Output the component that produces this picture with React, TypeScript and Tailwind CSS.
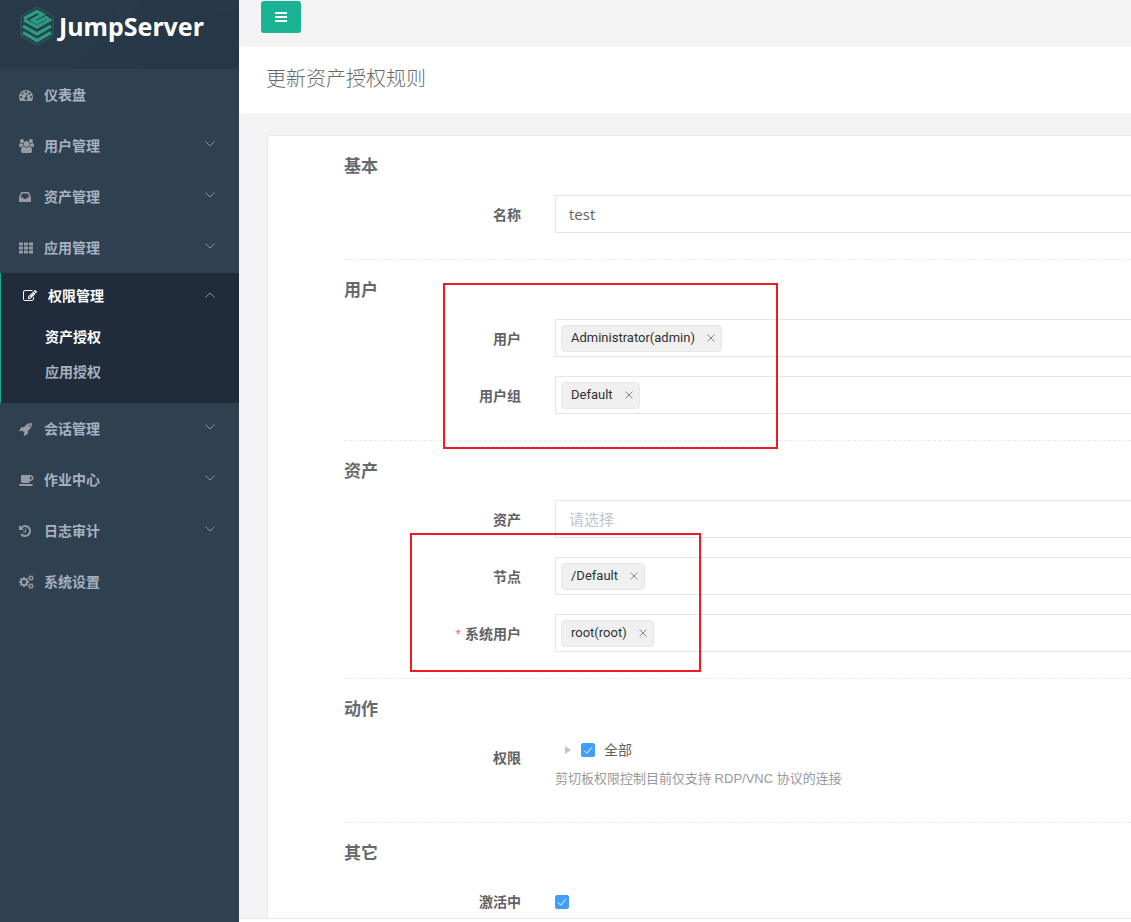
import { useState } from 'react';
import type { ReactNode } from 'react';
import clsx from 'clsx';

type IconShape = {
  width: number;
  path: string;
};

type MenuItem = {
  name: string;
  icon: keyof typeof ICONS;
  expandable?: boolean;
  children?: string[];
};

const ICONS = {
  dashboard: {
    width: 1792,
    path: 'M384 1152q0-53-37.5-90.5t-90.5-37.5-90.5 37.5-37.5 90.5 37.5 90.5 90.5 37.5 90.5-37.5 37.5-90.5zm192-448q0-53-37.5-90.5t-90.5-37.5-90.5 37.5-37.5 90.5 37.5 90.5 90.5 37.5 90.5-37.5 37.5-90.5zm428 481l101-382q6-26-7.5-48.5t-38.5-29.5-48 6.5-30 39.5l-101 382q-60 5-107 43.5t-63 98.5q-20 77 20 146t117 89 146-20 89-117q16-60-6-117t-72-91zm660-33q0-53-37.5-90.5t-90.5-37.5-90.5 37.5-37.5 90.5 37.5 90.5 90.5 37.5 90.5-37.5 37.5-90.5zm-640-640q0-53-37.5-90.5t-90.5-37.5-90.5 37.5-37.5 90.5 37.5 90.5 90.5 37.5 90.5-37.5 37.5-90.5zm448 192q0-53-37.5-90.5t-90.5-37.5-90.5 37.5-37.5 90.5 37.5 90.5 90.5 37.5 90.5-37.5 37.5-90.5zm320 448q0 261-141 483-19 29-54 29h-1402q-35 0-54-29-141-221-141-483 0-182 71-348t191-286 286-191 348-71 348 71 286 191 191 286 71 348z',
  },
  users: {
    width: 1920,
    path: 'M593 896q-162 5-265 128h-134q-82 0-138-40.5t-56-118.5q0-353 124-353 6 0 43.5 21t97.5 42.5 119 21.5q67 0 133-23-5 37-5 66 0 139 81 256zm1071 637q0 120-73 189.5t-194 69.5h-874q-121 0-194-69.5t-73-189.5q0-53 3.5-103.5t14-109 26.5-108.5 43-97.5 62-81 85.5-53.5 111.5-20q10 0 43 21.5t73 48 107 48 135 21.5 135-21.5 107-48 73-48 43-21.5q61 0 111.5 20t85.5 53.5 62 81 43 97.5 26.5 108.5 14 109 3.5 103.5zm-1024-1277q0 106-75 181t-181 75-181-75-75-181 75-181 181-75 181 75 75 181zm704 384q0 159-112.5 271.5t-271.5 112.5-271.5-112.5-112.5-271.5 112.5-271.5 271.5-112.5 271.5 112.5 112.5 271.5zm576 225q0 78-56 118.5t-138 40.5h-134q-103-123-265-128 81-117 81-256 0-29-5-66 66 23 133 23 59 0 119-21.5t97.5-42.5 43.5-21q124 0 124 353zm-128-609q0 106-75 181t-181 75-181-75-75-181 75-181 181-75 181 75 75 181z',
  },
  inbox: {
    width: 1536,
    path: 'M1023 960h316q-1-3-2.5-8t-2.5-8l-212-496h-708l-212 496q-1 2-2.5 8t-2.5 8h316l95 192h320zm513 30v482q0 26-19 45t-45 19h-1408q-26 0-45-19t-19-45v-482q0-62 25-123l238-552q10-25 36.5-42t52.5-17h832q26 0 52.5 17t36.5 42l238 552q25 61 25 123z',
  },
  grid: {
    width: 1792,
    path: 'M0 192h512v384H0zM640 192h512v384H640zM1280 192h512v384h-512zM0 704h512v384H0zM640 704h512v384H640zM1280 704h512v384h-512zM0 1216h512v384H0zM640 1216h512v384H640zM1280 1216h512v384h-512z',
  },
  edit: {
    width: 1792,
    path: 'M888 1184l116-116-152-152-116 116v56h96v96h56zm440-720q-16-16-33 1l-350 350q-17 17-1 33t33-1l350-350q17-17 1-33zm80 594v190q0 119-84.5 203.5t-203.5 84.5h-832q-119 0-203.5-84.5t-84.5-203.5v-832q0-119 84.5-203.5t203.5-84.5h832q63 0 117 25 15 7 18 23 3 17-9 29l-49 49q-14 14-32 8-23-6-45-6h-832q-66 0-113 47t-47 113v832q0 66 47 113t113 47h832q66 0 113-47t47-113v-126q0-13 9-22l64-64q15-15 35-7t20 29zm-96-738l288 288-672 672h-288v-288zm444 132l-92 92-288-288 92-92q28-28 68-28t68 28l152 152q28 28 28 68t-28 68z',
  },
  rocket: {
    width: 1664,
    path: 'M1440 448q0-40-28-68t-68-28-68 28-28 68 28 68 68 28 68-28 28-68zm224-288q0 249-75.5 430.5t-253.5 360.5q-81 80-195 176l-20 379q-2 16-16 26l-384 224q-7 4-16 4-12 0-23-9l-64-64q-13-14-8-32l85-276-281-281-276 85q-3 1-9 1-14 0-23-9l-64-64q-17-19-5-39l224-384q10-14 26-16l379-20q96-114 176-195 188-187 358-258t431-71q14 0 24 9.5t10 22.5z',
  },
  coffee: {
    width: 1856,
    path: 'M1664 640q0-80-56-136t-136-56h-64v384h64q80 0 136-56t56-136zm-1664 768h1792q0 106-75 181t-181 75h-1280q-106 0-181-75t-75-181zm1856-768q0 159-112.5 271.5t-271.5 112.5h-64v32q0 92-66 158t-158 66h-704q-92 0-158-66t-66-158v-736q0-26 19-45t45-19h1152q159 0 271.5 112.5t112.5 271.5z',
  },
  history: {
    width: 1536,
    path: 'M1536 896q0 156-61 298t-164 245-245 164-298 61q-172 0-327-72.5t-264-204.5q-7-10-6.5-22.5t8.5-20.5l137-138q10-9 25-9 16 2 23 12 73 95 179 147t225 52q104 0 198.5-40.5t163.5-109.5 109.5-163.5 40.5-198.5-40.5-198.5-109.5-163.5-163.5-109.5-198.5-40.5q-98 0-188 35.5t-160 101.5l137 138q31 30 14 69-17 40-59 40h-448q-26 0-45-19t-19-45v-448q0-42 40-59 39-17 69 14l130 129q107-101 244.5-156.5t284.5-55.5q156 0 298 61t245 164 164 245 61 298zm-640-288v448q0 14-9 23t-23 9h-320q-14 0-23-9t-9-23v-64q0-14 9-23t23-9h224v-352q0-14 9-23t23-9h64q14 0 23 9t9 23z',
  },
  cogs: {
    width: 1920,
    path: 'M896 896q0-106-75-181t-181-75-181 75-75 181 75 181 181 75 181-75 75-181zm768 512q0-52-38-90t-90-38-90 38-38 90q0 53 37.5 90.5t90.5 37.5 90.5-37.5 37.5-90.5zm0-1024q0-52-38-90t-90-38-90 38-38 90q0 53 37.5 90.5t90.5 37.5 90.5-37.5 37.5-90.5zm-384 421v185q0 10-7 19.5t-16 10.5l-155 24q-11 35-32 76 34 48 90 115 7 11 7 20 0 12-7 19-23 30-82.5 89.5t-78.5 59.5q-11 0-21-7l-115-90q-37 19-77 31-11 108-23 155-7 24-30 24h-186q-11 0-20-7.5t-10-17.5l-23-153q-34-10-75-31l-118 89q-7 7-20 7-11 0-21-8-144-133-144-160 0-9 7-19 10-14 41-53t47-61q-23-44-35-82l-152-24q-10-1-17-9.5t-7-19.5v-185q0-10 7-19.5t16-10.5l155-24q11-35 32-76-34-48-90-115-7-11-7-20 0-12 7-20 22-30 82-89t79-59q11 0 21 7l115 90q34-18 77-32 11-108 23-154 7-24 30-24h186q11 0 20 7.5t10 17.5l23 153q34 10 75 31l118-89q8-7 20-7 11 0 21 8 144 133 144 160 0 8-7 19-12 16-42 54t-45 60q23 48 34 82l152 23q10 2 17 10.5t7 19.5zm640 533v140q0 16-149 31-12 27-30 52 51 113 51 138 0 4-4 7-122 71-124 71-8 0-46-47t-52-68q-20 2-30 2t-30-2q-14 21-52 68t-46 47q-2 0-124-71-4-3-4-7 0-25 51-138-18-25-30-52-149-15-149-31v-140q0-16 149-31 13-29 30-52-51-113-51-138 0-4 4-7 4-2 35-20t59-34 30-16q8 0 46 46.5t52 67.5q20-2 30-2t30 2q51-71 92-112l6-2q4 0 124 70 4 3 4 7 0 25-51 138 17 23 30 52 149 15 149 31zm0-1024v140q0 16-149 31-12 27-30 52 51 113 51 138 0 4-4 7-122 71-124 71-8 0-46-47t-52-68q-20 2-30 2t-30-2q-14 21-52 68t-46 47q-2 0-124-71-4-3-4-7 0-25 51-138-18-25-30-52-149-15-149-31v-140q0-16 149-31 13-29 30-52-51-113-51-138 0-4 4-7 4-2 35-20t59-34 30-16q8 0 46 46.5t52 67.5q20-2 30-2t30 2q51-71 92-112l6-2q4 0 124 70 4 3 4 7 0 25-51 138 17 23 30 52 149 15 149 31z',
  },
} satisfies Record<string, IconShape>;

const MENU: MenuItem[] = [
  { name: '仪表盘', icon: 'dashboard' },
  { name: '用户管理', icon: 'users', expandable: true },
  { name: '资产管理', icon: 'inbox', expandable: true },
  { name: '应用管理', icon: 'grid', expandable: true },
  { name: '权限管理', icon: 'edit', expandable: true, children: ['资产授权', '应用授权'] },
  { name: '会话管理', icon: 'rocket', expandable: true },
  { name: '作业中心', icon: 'coffee', expandable: true },
  { name: '日志审计', icon: 'history', expandable: true },
  { name: '系统设置', icon: 'cogs' },
];

const MenuIcon = ({ icon }: { icon: keyof typeof ICONS }) => {
  const { width, path } = ICONS[icon];
  return (
    <svg viewBox={`0 0 ${width} 1792`} className="h-[14px] w-auto" fill="currentColor" aria-hidden="true">
      <path d={path} />
    </svg>
  );
};

const Chevron = ({ open }: { open?: boolean }) => (
  <svg
    viewBox="0 0 10 6"
    className={clsx('mb-[3px] h-[6px] w-[10px] text-[#8b939c]', open && 'rotate-180')}
    fill="none"
    stroke="currentColor"
    aria-hidden="true"
  >
    <path d="M0.5 0.5L5 5L9.5 0.5" />
  </svg>
);

const Logo = () => (
  <div className="relative h-[69px] overflow-hidden bg-[#273848]">
    <svg viewBox="0 0 239 68" className="absolute inset-0 h-full w-full" preserveAspectRatio="none" aria-hidden="true">
      <path d="M0 0H130L75 68H0z" fill="#283a4a" />
      <path d="M122 30L239 10V68H145z" fill="#263747" />
      <path d="M110 0H140L122 30z" fill="#293b4b" />
    </svg>
    <a href="#" className="relative flex h-[52px] items-center gap-[5px] pl-5">
      <svg viewBox="0 0 34 40" className="h-10 w-[34px]" fill="none" aria-hidden="true">
        <path d="M17 1L33 10V30L17 39L1 30V10z" stroke="#256b62" />
        <g stroke="#2c9a80" strokeWidth="3.4">
          <path d="M4 12.5L17 5.5L22.5 8.5L12.5 14L17 16.5L26 11.5L29.5 14L17 21L4 14" />
          <path d="M3 20L17 28L31 20" />
          <path d="M3 26.5L17 34.5L31 26.5" />
        </g>
      </svg>
      <span className="font-['Noto_Sans'] text-[25px] leading-10 font-bold text-white">JumpServer</span>
    </a>
  </div>
);

const Sidebar = () => (
  <aside className="w-[239px] shrink-0 bg-[#2f4050]">
    <Logo />
    <nav>
      <ul className="text-sm font-semibold text-[#a7b1c2]">
        {MENU.map((item) => (
          <li key={item.name} className={clsx(item.children && 'border-l border-[#19aa8d] bg-[#202c3b] pb-[14px]')}>
            <a
              href="#"
              className={clsx(
                'flex items-center pr-6',
                item.children ? 'h-[46px] pl-[22px] text-white' : 'h-[51px] pl-[19px]',
              )}
            >
              <span className={clsx('w-[25px]', item.children ? 'text-white' : 'text-[#979ba3]')}>
                <MenuIcon icon={item.icon} />
              </span>
              <span className="flex-1">{item.name}</span>
              {item.expandable ? <Chevron open={Boolean(item.children)} /> : null}
            </a>
            {item.children ? (
              <ul className="flex flex-col pl-11">
                {item.children.map((child, i) => (
                  <li key={child}>
                    <a href="#" className={clsx('block leading-[35px]', i === 0 && 'text-white')}>
                      {child}
                    </a>
                  </li>
                ))}
              </ul>
            ) : null}
          </li>
        ))}
      </ul>
    </nav>
  </aside>
);

const Section = ({ title, children }: { title: string; children: ReactNode }) => (
  <section className="relative border-dashed border-[#e7eaec] pt-4 pb-[26px] not-first:border-t">
    <h3 className="mb-[15px] text-[17px] leading-7 font-semibold text-[#676a6c]">{title}</h3>
    <div className="flex flex-col gap-[19px]">{children}</div>
  </section>
);

type RowProps = {
  label: string;
  htmlFor: string;
  required?: boolean;
  children: ReactNode;
};

const Row = ({ label, htmlFor, required, children }: RowProps) => (
  <div className="flex">
    <label
      htmlFor={htmlFor}
      className="h-[38px] w-[211px] shrink-0 pr-[34px] text-right text-sm leading-10 font-semibold text-[#606266]"
    >
      {required ? <span className="mr-1 font-['Liberation_Sans'] font-normal text-[#f56c6c]">*</span> : null}
      {label}
    </label>
    <div className="min-w-0 flex-1">{children}</div>
  </div>
);

const FIELD = 'h-[38px] w-full border border-r-0 border-[#e5e6e7] bg-white';

type TagSelectProps = {
  id: string;
  initial: string[];
};

const TagSelect = ({ id, initial }: TagSelectProps) => {
  const [tags, setTags] = useState(initial);

  return (
    <div className={clsx(FIELD, 'flex items-center pl-[5px]')}>
      {tags.map((tag) => (
        <span
          key={tag}
          className="mr-1 flex h-[27px] shrink-0 items-center gap-3 rounded border border-[#e6e6e6] bg-[#f0f0f0] pr-[6px] pl-[9px] font-[Roboto] text-[13px] text-[#303133]"
        >
          {tag}
          <button
            type="button"
            aria-label={`移除 ${tag}`}
            className="text-[#85888e]"
            onClick={() => setTags(tags.filter((t) => t !== tag))}
          >
            <svg viewBox="0 0 8 8" className="h-2 w-2" stroke="currentColor" aria-hidden="true">
              <path d="M0.5 0.5L7.5 7.5M7.5 0.5L0.5 7.5" />
            </svg>
          </button>
        </span>
      ))}
      <input
        id={id}
        type="text"
        placeholder={tags.length === 0 ? '请选择' : undefined}
        className="h-full min-w-0 flex-1 bg-transparent pl-2 text-[15px] outline-none placeholder:text-[#c0c4cc]"
      />
    </div>
  );
};

const CheckBox = ({ id }: { id: string }) => (
  <span className="relative block h-[14px] w-[14px]">
    <input
      id={id}
      type="checkbox"
      defaultChecked
      className="peer block h-full w-full appearance-none rounded-xs border border-[#dcdfe6] bg-white checked:border-[#409eff] checked:bg-[#409eff]"
    />
    <svg
      viewBox="0 0 14 14"
      className="pointer-events-none absolute inset-0 hidden peer-checked:block"
      fill="none"
      stroke="#fff"
      aria-hidden="true"
    >
      <path d="M3 7.5L5.7 10.2L11 4.2" />
    </svg>
  </span>
);

const App = () => {
  return (
    <div className="flex h-screen overflow-hidden bg-[#f3f3f4] font-['Open_Sans','Noto_Sans_CJK_SC',sans-serif] text-[#676a6c]">
      <Sidebar />

      <div className="flex min-w-0 flex-1 flex-col">
        <header className="h-[47px] shrink-0 px-[22px] pt-px">
          <button
            type="button"
            aria-label="菜单"
            className="flex h-8 w-10 items-center justify-center rounded-[3px] bg-[#1ab394] text-white"
          >
            <svg viewBox="0 0 12 10" className="h-[10px] w-3" fill="currentColor" aria-hidden="true">
              <path d="M0 0h12v2H0zM0 4h12v2H0zM0 8h12v2H0z" />
            </svg>
          </button>
        </header>

        <div className="flex h-[66px] shrink-0 items-center bg-white pb-0.5 pl-[27px]">
          <h2 className="text-xl font-light">更新资产授权规则</h2>
        </div>

        <main className="min-h-0 flex-1 overflow-hidden pt-[22px] pl-7">
          <form className="rounded-tl border-t border-l border-[#e7eaec] bg-white pl-[76px]">
            <Section title="基本">
              <Row label="名称" htmlFor="name">
                <input
                  id="name"
                  type="text"
                  defaultValue="test"
                  className={clsx(FIELD, 'px-[13px] text-[15px] text-[#606266] outline-none')}
                />
              </Row>
            </Section>

            <Section title="用户">
              <Row label="用户" htmlFor="users">
                <TagSelect id="users" initial={['Administrator(admin)']} />
              </Row>
              <Row label="用户组" htmlFor="user-groups">
                <TagSelect id="user-groups" initial={['Default']} />
              </Row>
              <div className="pointer-events-none absolute top-[23px] left-[99px] z-10 h-[166px] w-[335px] border-2 border-[#ed1c24]" />
            </Section>

            <Section title="资产">
              <Row label="资产" htmlFor="assets">
                <TagSelect id="assets" initial={[]} />
              </Row>
              <Row label="节点" htmlFor="nodes">
                <TagSelect id="nodes" initial={['/Default']} />
              </Row>
              <Row label="系统用户" htmlFor="system-users" required>
                <TagSelect id="system-users" initial={['root(root)']} />
              </Row>
              <div className="pointer-events-none absolute top-[92px] left-[66px] z-10 h-[139px] w-[291px] border-2 border-[#ed1c24]" />
            </Section>

            <Section title="动作">
              <Row label="权限" htmlFor="actions">
                <div className="flex h-6 items-center pl-[10px]">
                  <svg viewBox="0 0 6 8" className="mr-[10px] h-2 w-[6px]" fill="#c0c4cc" aria-hidden="true">
                    <path d="M0 0L6 4L0 8z" />
                  </svg>
                  <CheckBox id="actions" />
                  <span className="ml-[9px] text-sm text-[#606266]">全部</span>
                </div>
                <p className="font-['Liberation_Sans','Noto_Sans_CJK_SC',sans-serif] text-[13px] leading-[34px] text-[#999]">
                  剪切板权限控制目前仅支持 RDP/VNC 协议的连接
                </p>
              </Row>
            </Section>

            <Section title="其它">
              <Row label="激活中" htmlFor="active">
                <div className="flex h-10 items-center">
                  <CheckBox id="active" />
                </div>
              </Row>
            </Section>
          </form>
        </main>

        <footer className="h-1 shrink-0 border-t border-[#e7eaec] bg-white" />
      </div>
    </div>
  );
};

export default App;
